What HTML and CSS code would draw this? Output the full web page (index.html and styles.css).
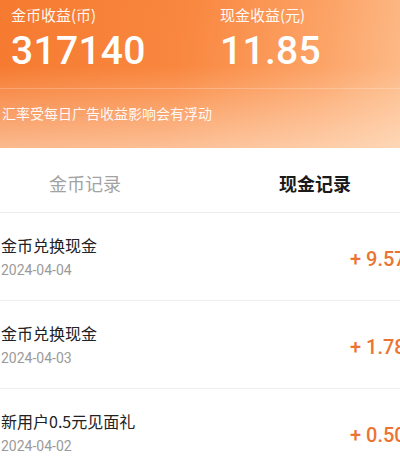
FILE: index.html
```html
<!DOCTYPE html>
<html lang="zh">
<head>
<meta charset="utf-8">
<link rel="stylesheet" href="styles.css">
</head>
<body>
<div class="page">
  <header class="hero">
    <div class="stats">
      <div class="stat">
        <div class="stat-label">金币收益(币)</div>
        <div class="stat-value">317140</div>
      </div>
      <div class="stat stat-cash">
        <div class="stat-label">现金收益(元)</div>
        <div class="stat-value">11.85</div>
      </div>
    </div>
    <div class="tip">汇率受每日广告收益影响会有浮动</div>
  </header>
  <nav class="tabs">
    <div class="tab">金币记录</div>
    <div class="tab tab-active">现金记录</div>
  </nav>
  <ul class="records">
    <li class="record">
      <div class="record-info">
        <div class="record-title">金币兑换现金</div>
        <div class="record-date">2024-04-04</div>
      </div>
      <div class="record-amount">+ 9.57</div>
    </li>
    <li class="record">
      <div class="record-info">
        <div class="record-title">金币兑换现金</div>
        <div class="record-date">2024-04-03</div>
      </div>
      <div class="record-amount">+ 1.78</div>
    </li>
    <li class="record">
      <div class="record-info">
        <div class="record-title">新用户0.5元见面礼</div>
        <div class="record-date">2024-04-02</div>
      </div>
      <div class="record-amount">+ 0.50</div>
    </li>
  </ul>
</div>
</body>
</html>
```
FILE: styles.css
```css
html, body {
  margin: 0;
  padding: 0;
  background: #fff;
  overflow: hidden;
}
body {
  width: 400px;
  height: 472px;
  font-family: "Noto Sans CJK SC", "Roboto", sans-serif;
}
.page {
  width: 460px;
  margin-left: -30px;
}
.hero {
  height: 148px;
  background:
    linear-gradient(to bottom, rgba(255,255,255,0) 45%, rgba(255,236,218,0.55) 100%),
    linear-gradient(100deg, #f5782e 0%, #f9873f 45%, #fca468 75%, #fdc597 100%);
  color: #fff;
  box-sizing: border-box;
}
.stats {
  display: flex;
  height: 89px;
  border-bottom: 1px solid rgba(255,255,255,0.22);
  box-sizing: border-box;
  padding-left: 41px;
  padding-top: 4px;
}
.stat { width: 209px; }
.stat-label {
  font-size: 15px;
  line-height: 22px;
  opacity: 0.95;
}
.stat-value {
  font-family: "Roboto", sans-serif;
  font-weight: 500;
  font-size: 39px;
  line-height: 46px;
  margin-top: 2px;
  letter-spacing: 0.3px;
}
.tip {
  padding-left: 32px;
  padding-top: 14px;
  font-size: 14px;
  line-height: 20px;
  color: rgba(255,255,255,0.95);
}
.tabs {
  display: flex;
  height: 65px;
  border-bottom: 1px solid #ececec;
  box-sizing: border-box;
}
.tab {
  flex: 1;
  text-align: center;
  font-size: 18px;
  line-height: 26px;
  padding-top: 22px;
  color: #a3a3a3;
}
.tab-active {
  color: #1a1a1a;
  font-weight: 700;
}
.records {
  list-style: none;
  margin: 0;
  padding: 0;
}
.record {
  display: flex;
  height: 88px;
  box-sizing: border-box;
  border-bottom: 1px solid #efefef;
  padding: 21px 0 0 31px;
}
.record-info { flex: 1; }
.record-title {
  font-size: 16px;
  line-height: 22px;
  color: #222;
}
.record-date {
  margin-top: 4px;
  font-family: "Roboto", sans-serif;
  font-size: 14px;
  line-height: 20px;
  color: #9a9a9a;
}
.record-amount {
  width: 80px;
  margin-top: 12px;
  font-family: "Roboto", sans-serif;
  font-weight: 500;
  font-size: 20px;
  line-height: 26px;
  color: #ec7433;
  white-space: nowrap;
}
```
